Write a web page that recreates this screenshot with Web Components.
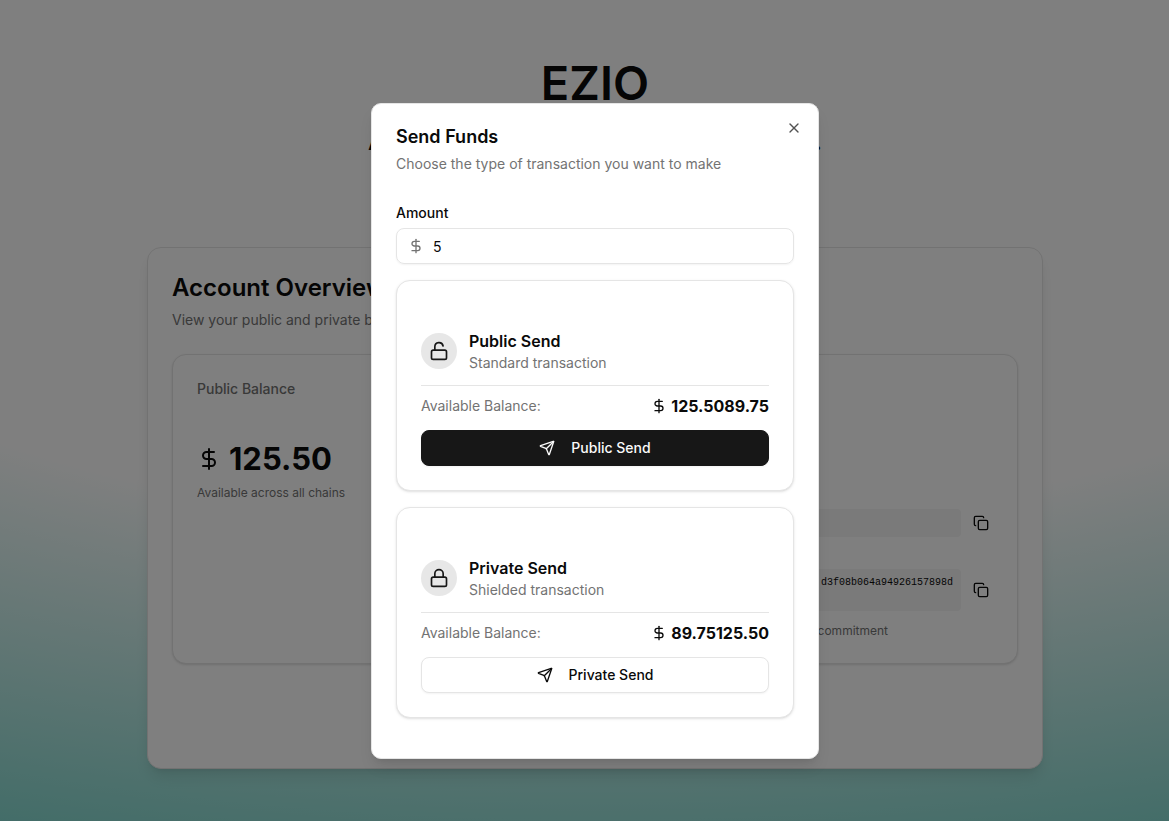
<!DOCTYPE html>
<html lang="en">
<head>
<meta charset="utf-8">
<title>EZIO</title>
<style>
html, body { margin: 0; height: 100%; }
body { font-family: Inter, sans-serif; font-size: 14px; line-height: 20px; color: #0a0a0a; overflow: hidden; }
</style>
</head>
<body>
<ez-app></ez-app>
<script>
const ICONS = {
  dollar: '<line x1="12" x2="12" y1="2" y2="22"/><path d="M17 5H9.5a3.5 3.5 0 0 0 0 7h5a3.5 3.5 0 0 1 0 7H6"/>',
  copy: '<rect width="14" height="14" x="8" y="8" rx="2" ry="2"/><path d="M4 16c-1.1 0-2-.9-2-2V4c0-1.1.9-2 2-2h10c1.1 0 2 .9 2 2"/>',
  x: '<path d="M18 6 6 18"/><path d="m6 6 12 12"/>',
  lock: '<rect width="18" height="11" x="3" y="11" rx="2" ry="2"/><path d="M7 11V7a5 5 0 0 1 10 0v4"/>',
  unlock: '<rect width="18" height="11" x="3" y="11" rx="2" ry="2"/><path d="M7 11V7a5 5 0 0 1 9.9-1"/>',
  send: '<path d="M14.536 21.686a.5.5 0 0 0 .937-.024l6.5-19a.496.496 0 0 0-.635-.635l-19 6.5a.5.5 0 0 0-.024.937l7.93 3.18a2 2 0 0 1 1.112 1.11z"/><path d="m21.854 2.147-10.94 10.939"/>'
};

function define(name, render) {
  customElements.define(name, class extends HTMLElement {
    connectedCallback() {
      if (this.shadowRoot) return;
      this.attachShadow({ mode: 'open' }).innerHTML =
        '<style>*{box-sizing:border-box}h1,h2,h3,p{margin:0}:host{display:block;box-sizing:border-box}</style>' + render(this);
    }
  });
}

define('ez-icon', el => `
<style>
:host { display: block; flex: none; width: var(--size, 16px); height: var(--size, 16px); }
svg { display: block; width: 100%; height: 100%; fill: none; stroke: currentColor; stroke-width: 2; stroke-linecap: round; stroke-linejoin: round; }
</style>
<svg viewBox="0 0 24 24" aria-hidden="true">${ICONS[el.getAttribute('name')]}</svg>`);

define('ez-card', () => `
<style>
:host { padding: 24px; border: 1px solid #e5e5e5; border-radius: 14px; background: #fff; box-shadow: 0 1px 3px rgba(0,0,0,.1), 0 1px 2px -1px rgba(0,0,0,.1); }
</style><slot></slot>`);

define('ez-hash', () => `
<style>
:host { display: flex; align-items: center; gap: 8px; }
code { flex: 1; min-width: 0; padding: 6px 8px; border-radius: 4px; background: #f5f5f5; font: 10px/15px "Liberation Mono", monospace; text-align: right; min-height: var(--code-height, 28px); white-space: nowrap; overflow: hidden; }
button { display: flex; align-items: center; justify-content: center; width: 24px; height: 24px; padding: 0; border: 0; background: none; color: inherit; }
</style>
<code><slot></slot></code><button type="button" aria-label="Copy"><ez-icon name="copy"></ez-icon></button>`);

define('ez-overview', () => `
<style>
:host { display: block; width: 100%; max-width: 896px; min-height: 522px; padding: 24px; border: 1px solid #e5e5e5; border-radius: 14px; background: #fff; box-shadow: 0 10px 15px -3px rgba(0,0,0,.1), 0 4px 6px -4px rgba(0,0,0,.1); }
h2 { font-size: 24px; line-height: 32px; font-weight: 600; }
.sub { margin-top: 6px; font-size: 14px; line-height: 20px; color: #737373; }
ez-card { margin-top: 24px; min-height: 310px; }
.columns { display: grid; grid-template-columns: 1fr 1fr; gap: 24px; }
h3 { font-size: 14px; line-height: 20px; font-weight: 500; color: #737373; }
.balance { display: flex; align-items: center; gap: 8px; margin-top: 42px; font-size: 31px; line-height: 36px; font-weight: 700; --size: 24px; }
.note { font-size: 12px; line-height: 16px; color: #737373; }
.left .note { margin-top: 8px; }
.addresses { padding-top: 130px; }
.addresses ez-hash + ez-hash { margin-top: 32px; --code-height: 42px; }
.addresses .note { margin-top: 12px; padding-right: 105px; text-align: right; }
</style>
<h2>Account Overview</h2>
<p class="sub">View your public and private ba</p>
<ez-card><div class="columns">
<div class="left"><h3>Public Balance</h3>
<div class="balance"><ez-icon name="dollar"></ez-icon><span>125.50</span></div>
<p class="note">Available across all chains</p></div>
<div class="addresses"><ez-hash></ez-hash><ez-hash>d3f08b064a94926157898d</ez-hash>
<p class="note">commitment</p></div>
</div></ez-card>`);

define('ez-send-option', el => {
  const title = el.getAttribute('label');
  return `
<style>
.head { display: flex; align-items: center; gap: 12px; padding: 24px 0 12px; border-bottom: 1px solid #e5e5e5; }
.badge { display: flex; padding: 8px; border-radius: 50%; background: #e7e7e7; color: #171717; --size: 20px; }
h3 { font-size: 16px; line-height: 24px; font-weight: 600; }
.muted { color: #737373; font-size: 14px; line-height: 20px; }
.row { display: flex; justify-content: space-between; align-items: center; margin: 8px 0 12px; }
.amount { display: flex; align-items: center; gap: 4px; font-size: 16px; line-height: 24px; font-weight: 700; }
button { display: flex; align-items: center; justify-content: center; gap: 16px; width: 100%; height: 36px; padding: 0; border: 1px solid #e5e5e5; border-radius: 8px; background: #fff; color: #0a0a0a; font: 500 14px/20px Inter, sans-serif; box-shadow: 0 1px 2px rgba(0,0,0,.05); }
:host([primary]) button { background: #171717; border-color: #171717; color: #fafafa; }
</style>
<ez-card>
<div class="head"><div class="badge"><ez-icon name="${el.getAttribute('icon')}"></ez-icon></div>
<div><h3>${title}</h3><p class="muted">${el.getAttribute('kind')}</p></div></div>
<div class="row"><span class="muted">Available Balance:</span><span class="amount"><ez-icon name="dollar"></ez-icon><slot></slot></span></div>
<button type="button"><ez-icon name="send"></ez-icon>${title}</button>
</ez-card>`;
});

define('ez-dialog', () => `
<style>
:host { position: relative; width: 100%; max-width: 448px; padding: 20px 24px 40px; border: 1px solid #e5e5e5; border-radius: 10px; background: #fff; box-shadow: 0 10px 15px -3px rgba(0,0,0,.1), 0 4px 6px -4px rgba(0,0,0,.1); }
.close { position: absolute; top: 16px; right: 16px; display: flex; padding: 0; border: 0; background: none; color: #0a0a0a; opacity: .7; }
h2 { font-size: 18px; line-height: 26px; font-weight: 600; }
.sub { margin-top: 4px; color: #737373; }
label { display: block; margin: 28px 0 4px; font-weight: 500; line-height: 22px; }
.field { display: flex; align-items: center; gap: 9px; height: 36px; padding: 0 11px; border: 1px solid #e5e5e5; border-radius: 8px; box-shadow: 0 1px 2px rgba(0,0,0,.05); }
.field ez-icon { color: #737373; }
input { flex: 1; min-width: 0; padding: 2px 0 0; border: 0; outline: 0; background: none; color: inherit; font: 14px/20px Inter, sans-serif; }
ez-send-option { margin-top: 16px; }
</style>
<h2>Send Funds</h2>
<p class="sub">Choose the type of transaction you want to make</p>
<label for="amount">Amount</label>
<div class="field"><ez-icon name="dollar"></ez-icon><input id="amount" inputmode="decimal" value="5"></div>
<ez-send-option primary icon="unlock" label="Public Send" kind="Standard transaction">125.5089.75</ez-send-option>
<ez-send-option icon="lock" label="Private Send" kind="Shielded transaction">89.75125.50</ez-send-option>
<button class="close" type="button" aria-label="Close"><ez-icon name="x"></ez-icon></button>`);

define('ez-app', () => `
<style>
:host { position: relative; min-height: 100%; overflow: hidden; display: grid; }
.page { display: flex; flex-direction: column; align-items: center; padding: 59px 0 0 21px; background: radial-gradient(210% 134% at 51% 11%, #fff 40%, #14b8a6 100%); }
h1 { font-size: 47px; line-height: 48px; font-weight: 600; }
.tagline { display: flex; justify-content: space-between; width: 100%; max-width: 454px; margin: 19px 0 89px; font-size: 24px; line-height: 32px; font-weight: 600; }
.overlay { position: absolute; inset: 0; display: flex; align-items: center; justify-content: center; padding: 41px 0 0 21px; background: rgba(0,0,0,.5); }
</style>
<div class="page"><h1>EZIO</h1><p class="tagline"><span>A</span><span>.</span></p><ez-overview></ez-overview></div>
<div class="overlay"><ez-dialog role="dialog" aria-modal="true" aria-label="Send Funds"></ez-dialog></div>`);
</script>
</body>
</html>
